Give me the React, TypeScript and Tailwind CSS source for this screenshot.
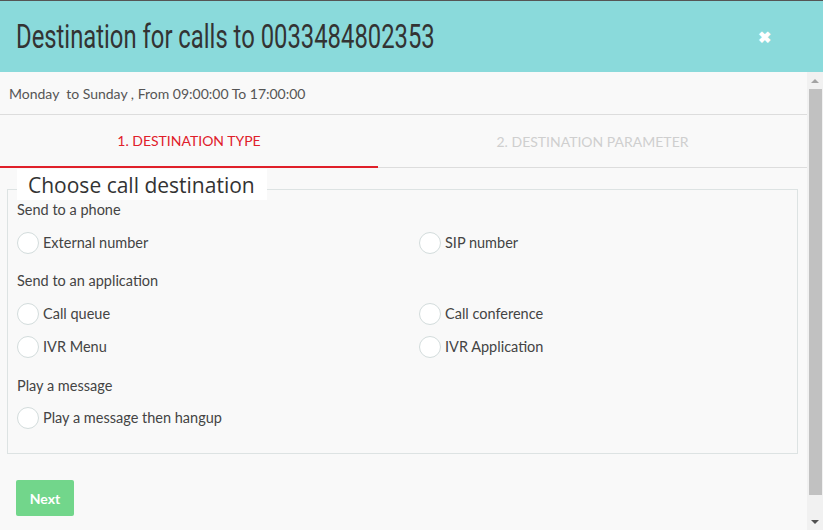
import React from 'react'

const SANS = { fontFamily: 'Lato, "Open Sans", sans-serif' }

type Option = { label: string }

function Radio({ label }: Option) {
  return (
    <label className="flex items-center gap-[4px] text-[14.5px] text-[#444] h-[24px]">
      <span className="w-[22px] h-[22px] rounded-full border border-[#d3dcdc] bg-white" />
      <span>{label}</span>
    </label>
  )
}

function Pair({ left, right }: { left: string; right?: string }) {
  return (
    <div className="grid grid-cols-[402px_1fr]">
      <Radio label={left} />
      {right && <Radio label={right} />}
    </div>
  )
}

export default function App() {
  return (
    <div className="w-[823px] h-[530px] flex flex-col bg-[#f9f9f9] overflow-hidden border-t border-[#555]" style={SANS}>
      <div className="h-[71px] bg-[#8adadb] flex items-center justify-between pl-[16px] pr-[52px]">
        <h1
          className="text-[33px] text-[#333] origin-left scale-x-[0.722] whitespace-nowrap leading-none -mt-[1px]"
          style={{ fontFamily: 'Roboto, sans-serif' }}
        >
          Destination for calls to 0033484802353
        </h1>
        <span className="text-white text-[16px] font-bold leading-none">✖</span>
      </div>

      <div className="flex flex-1 min-h-0">
        <div className="flex-1 flex flex-col">
          <div className="h-[43px] flex items-center pl-[9px] text-[14px] text-[#555] border-b border-[#ddd]">
            Monday&nbsp; to Sunday , From 09:00:00 To 17:00:00
          </div>

          <div className="flex h-[53px] border-b border-[#ddd]">
            <div className="w-[378px] flex items-center justify-center text-[14px] text-[#e0202a] border-b-2 border-[#e0202a] -mb-px">
              1. DESTINATION TYPE
            </div>
            <div className="flex-1 flex items-center justify-center text-[14px] text-[#cfcfcf]">
              2. DESTINATION PARAMETER
            </div>
          </div>

          <div className="ml-[7px] mr-[9px] mt-[21px] h-[265px] border border-[#dde3e3] pl-[9px] flex flex-col">
            <div
              className="-mt-[21px] self-start bg-white pl-[11px] pr-[12px] h-[31px] text-[21px] text-[#333] leading-[33px] whitespace-nowrap"
              style={{ fontFamily: '"Open Sans", sans-serif' }}
            >
              Choose call destination
            </div>
            <div className="text-[14.5px] text-[#444] leading-[20px]">Send to a phone</div>
            <div className="mt-[11px]">
              <Pair left="External number" right="SIP number" />
            </div>
            <div className="text-[14.5px] text-[#444] mt-[16px] leading-[20px]">Send to an application</div>
            <div className="mt-[11px] flex flex-col gap-[9px]">
              <Pair left="Call queue" right="Call conference" />
              <Pair left="IVR Menu" right="IVR Application" />
            </div>
            <div className="text-[14.5px] text-[#444] mt-[17px] leading-[20px]">Play a message</div>
            <div className="mt-[10px]">
              <Pair left="Play a message then hangup" />
            </div>
          </div>

          <div className="pl-[16px] mt-[26px]">
            <button className="w-[58px] h-[36px] rounded-[2px] bg-[#72d68b] text-white font-bold text-[14px]">
              Next
            </button>
          </div>
        </div>

        <div className="w-[16px] bg-[#f1f1f1] flex flex-col items-center">
          <div className="h-[17px] flex items-center justify-center">
            <span className="w-0 h-0 border-l-[4px] border-r-[4px] border-b-[4px] border-l-transparent border-r-transparent border-b-[#a3a3a3]" />
          </div>
          <div className="w-[13px] h-[406px] bg-[#c1c1c1]" />
          <div className="flex-1" />
          <div className="h-[17px] flex items-center justify-center">
            <span className="w-0 h-0 border-l-[4px] border-r-[4px] border-t-[4px] border-l-transparent border-r-transparent border-t-[#505050]" />
          </div>
        </div>
      </div>
    </div>
  )
}
